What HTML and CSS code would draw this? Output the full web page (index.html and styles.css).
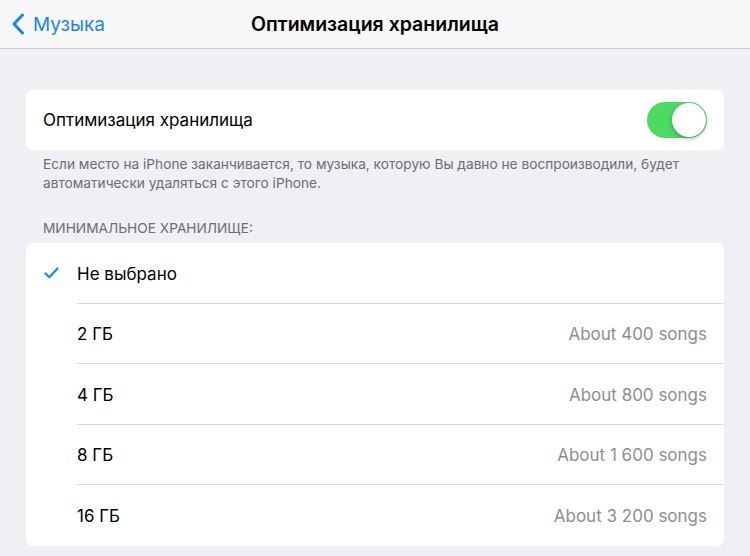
FILE: index.html
```html
<!DOCTYPE html>
<html lang="ru">
<head>
    <meta charset="UTF-8">
    <title>Оптимизация хранилища</title>
    <link rel="stylesheet" href="styles.css">
</head>
<body>
<div class="navbar">
    <div class="back">
        <svg class="chevron" width="14" height="22" viewBox="0 0 14 22">
            <path d="M11.5 2 L3 11 L11.5 20" fill="none" stroke="#1a82fb" stroke-width="3" stroke-linecap="round" stroke-linejoin="round"/>
        </svg>
        <span>Музыка</span>
    </div>
    <div class="title">Оптимизация хранилища</div>
</div>

<div class="content">
    <div class="group">
        <div class="cell">
            <span class="label">Оптимизация хранилища</span>
            <div class="toggle"><div class="knob"></div></div>
        </div>
    </div>
    <div class="footer">Если место на iPhone заканчивается, то музыка, которую Вы давно не воспроизводили, будет автоматически удаляться с этого iPhone.</div>

    <div class="header">МИНИМАЛЬНОЕ ХРАНИЛИЩЕ:</div>
    <div class="group list">
        <div class="row">
            <span class="check">
                <svg width="15" height="12" viewBox="0 0 15 12">
                    <path d="M1.5 6.5 L5.3 10.2 L13.5 1.5" fill="none" stroke="#1a82fb" stroke-width="2.2" stroke-linecap="round" stroke-linejoin="round"/>
                </svg>
            </span>
            <div class="row-body"><span class="label">Не выбрано</span></div>
        </div>
        <div class="row">
            <span class="check"></span>
            <div class="row-body"><span class="label">2 ГБ</span><span class="detail">About 400 songs</span></div>
        </div>
        <div class="row">
            <span class="check"></span>
            <div class="row-body"><span class="label">4 ГБ</span><span class="detail">About 800 songs</span></div>
        </div>
        <div class="row">
            <span class="check"></span>
            <div class="row-body"><span class="label">8 ГБ</span><span class="detail">About 1 600 songs</span></div>
        </div>
        <div class="row">
            <span class="check"></span>
            <div class="row-body"><span class="label">16 ГБ</span><span class="detail">About 3 200 songs</span></div>
        </div>
    </div>
</div>
</body>
</html>
```

FILE: styles.css
```css
body {
    margin: 0;
    background: #efeff4;
    font-family: Inter, "Noto Sans", sans-serif;
    color: #000;
}
.navbar {
    height: 48px;
    background: #f7f7f8;
    border-bottom: 1px solid #c9c9ce;
    display: flex;
    align-items: center;
    justify-content: center;
    position: relative;
}
.back {
    position: absolute;
    left: 11px;
    top: 0;
    height: 48px;
    display: flex;
    align-items: center;
    gap: 8px;
    color: #1a82fb;
    font-size: 19px;
}
.title {
    font-size: 19.5px;
    font-weight: 600;
}
.content {
    padding: 41px 26px 0;
}
.group {
    background: #fff;
    border-radius: 7px;
}
.cell {
    height: 60px;
    display: flex;
    align-items: center;
    justify-content: space-between;
    padding: 0 17px;
}
.label {
    font-size: 17px;
}
.toggle {
    width: 60px;
    height: 36px;
    border-radius: 18px;
    background: #4cd964;
    position: relative;
}
.knob {
    position: absolute;
    right: 1px;
    top: 1px;
    width: 34px;
    height: 34px;
    border-radius: 50%;
    background: #fff;
    box-shadow: 0 2px 4px rgba(0, 0, 0, 0.25);
}
.footer {
    padding: 5px 17px 0;
    font-size: 13.7px;
    line-height: 19px;
    color: #6d6d72;
}
.header {
    padding: 27px 17px 7px;
    font-size: 13.7px;
    color: #6d6d72;
}
.row {
    display: flex;
    height: 60.5px;
}
.check {
    width: 51px;
    display: flex;
    align-items: center;
    justify-content: center;
}
.row-body {
    flex: 1;
    display: flex;
    align-items: center;
    justify-content: space-between;
    padding: 2px 17px 0 0;
    border-bottom: 1px solid #dcdce0;
}
.row:last-child .row-body {
    border-bottom: none;
}
.detail {
    font-size: 17px;
    color: #8e8e93;
}
```
